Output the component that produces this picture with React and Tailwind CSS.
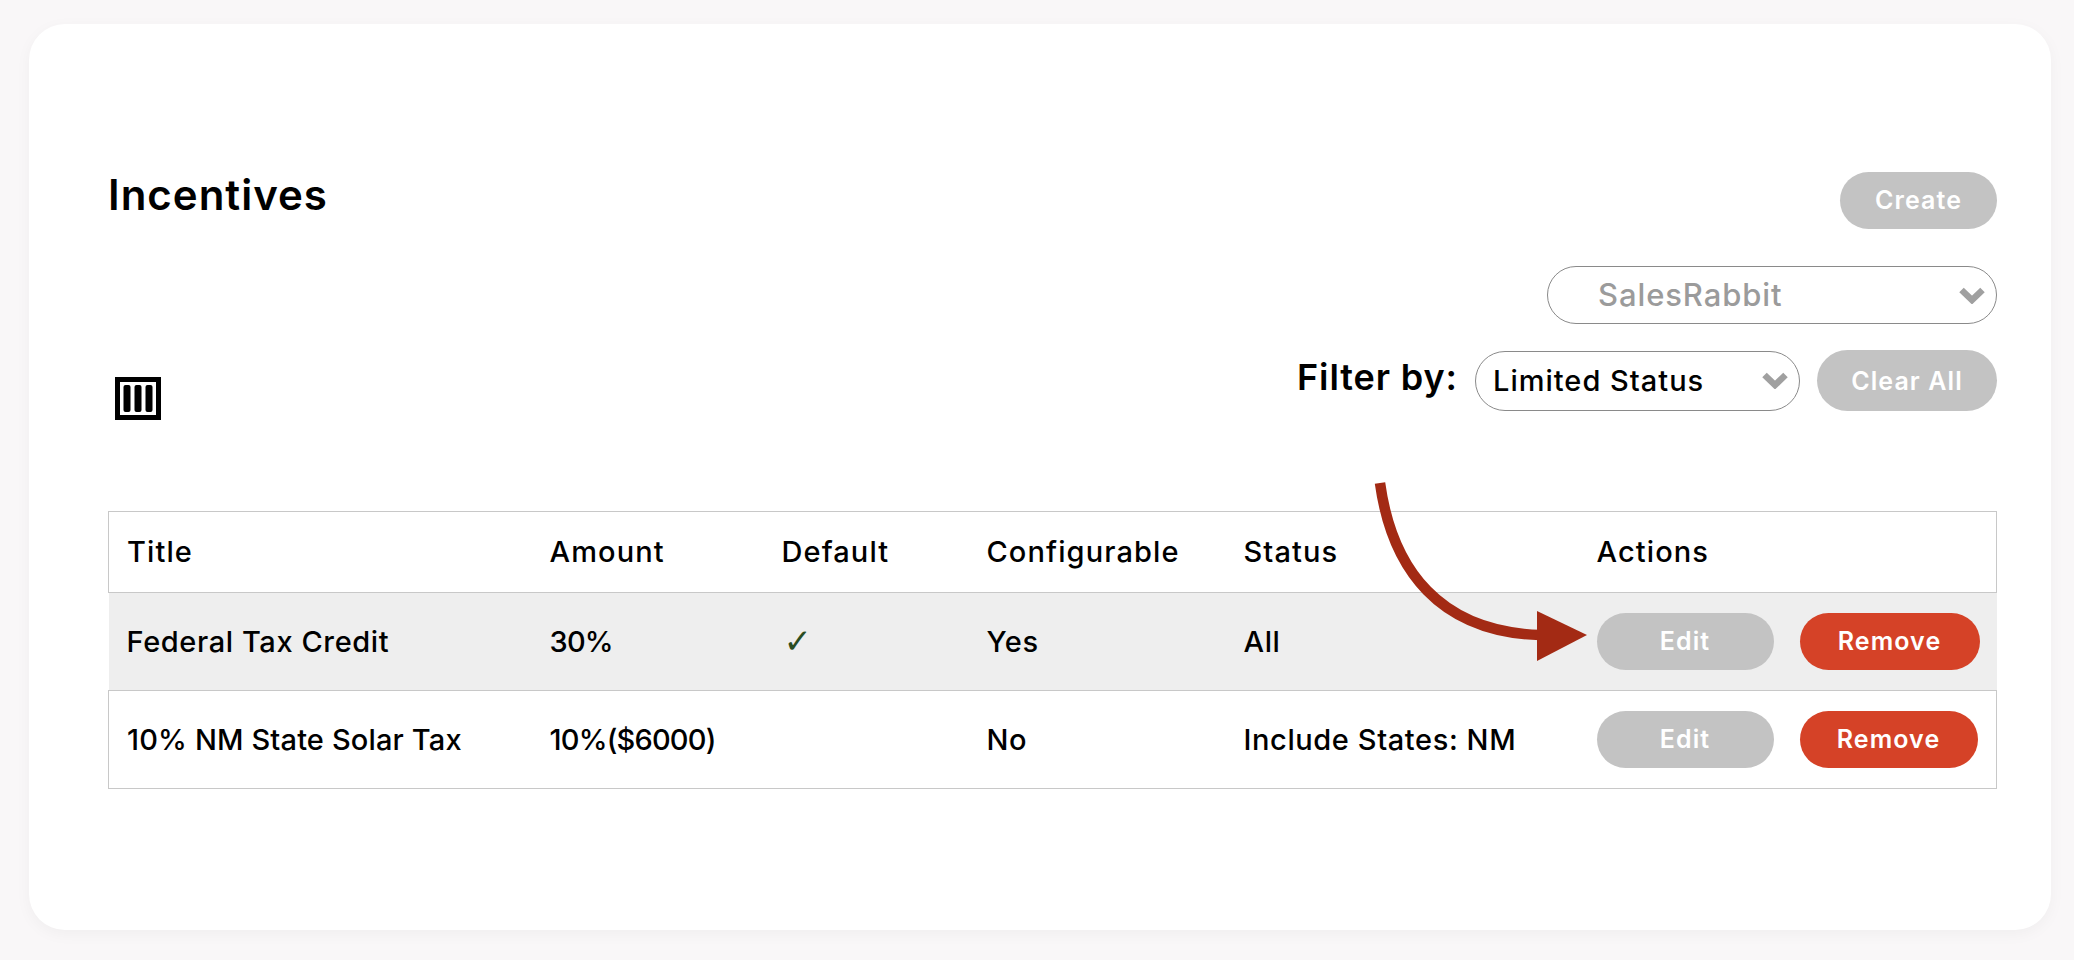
const rows = [
  { title: 'Federal Tax Credit', titleClass: 'tracking-[0.6px]', amount: '30%', check: true, configurable: 'Yes', status: 'All', shaded: true },
  { title: '10% NM State Solar Tax', titleClass: 'tracking-[0.15px]', amount: '10%($6000)', check: false, configurable: 'No', status: 'Include States: NM', shaded: false },
];

function Chevron() {
  return (
    <svg viewBox="0 0 26 17" className="w-[26px] h-[17px] shrink-0" fill="none">
      <path d="M2.5 3 13 13 23.5 3" stroke="#a0a0a0" strokeWidth="6.5" />
    </svg>
  );
}

function PillButton({ children, className }) {
  return (
    <button className={`rounded-full bg-[#c3c3c3] text-white font-semibold text-[25px] tracking-[1.1px] ${className}`}>
      {children}
    </button>
  );
}

function ColumnsIcon() {
  return (
    <svg viewBox="0 0 46 43" className="w-[46px] h-[43px]">
      <rect x="2.5" y="2.5" width="41" height="38" fill="none" stroke="#000" strokeWidth="5" />
      <rect x="8.5" y="8" width="7" height="27" rx="2" fill="#000" />
      <rect x="19.5" y="8" width="7" height="27" rx="2" fill="#000" />
      <rect x="30.5" y="8" width="7" height="27" rx="2" fill="#000" />
    </svg>
  );
}

export default function App() {
  return (
    <div className="h-[960px] bg-[#f9f7f8] pt-[24px] px-[23px] font-['Inter',sans-serif] text-black overflow-hidden">
      <div className="relative ml-[6px] h-[906px] rounded-[36px] bg-white shadow-[0_4px_16px_rgba(0,0,0,0.04)] pl-[79px] pr-[54px] pt-[148px]">
        <div className="flex justify-between">
          <h1 className="text-[42px] leading-[50px] font-semibold -mt-[2px] tracking-[1px]">Incentives</h1>
          <PillButton className="w-[157px] h-[57px]">Create</PillButton>
        </div>

        <div className="flex justify-end mt-[37px]">
          <div className="w-[450px] h-[58px] rounded-full border border-[#8a8a8a] flex items-center justify-between pl-[50px] pr-[11px] text-[31px] font-[450] tracking-[0.9px] text-[#9b9b9b]">
            <span>SalesRabbit</span>
            <Chevron />
          </div>
        </div>

        <div className="flex items-start justify-between mt-[26px]">
          <div className="ml-[7px] mt-[27px]">
            <ColumnsIcon />
          </div>
          <div className="flex items-center">
            <span className="text-[36px] font-semibold tracking-[0.9px] mr-[17px] -mt-[8px]">Filter by:</span>
            <div className="w-[325px] h-[60px] rounded-full border border-[#8a8a8a] flex items-center justify-between pl-[17px] pr-[11px] text-[29px] font-[450] tracking-[1px]">
              <span>Limited Status</span>
              <Chevron />
            </div>
            <PillButton className="w-[180px] h-[61px] ml-[17px] pt-[2px]">Clear All</PillButton>
          </div>
        </div>

        <table className="w-[1889px] mt-[91px] table-fixed border-collapse text-[29px] font-[450] tracking-[0.6px]">
          <colgroup>
            <col className="w-[423px]" />
            <col className="w-[232px]" />
            <col className="w-[205px]" />
            <col className="w-[257px]" />
            <col className="w-[353px]" />
            <col />
          </colgroup>
          <thead>
            <tr className="h-[81px] text-left border border-[#c8c8c8]">
              {['Title', 'Amount', 'Default', 'Configurable', 'Status', 'Actions'].map((h) => (
                <th key={h} className="pl-[18px] font-[450] tracking-[1.1px]">{h}</th>
              ))}
            </tr>
          </thead>
          <tbody>
            {rows.map((r) => (
              <tr key={r.title} className={r.shaded ? 'h-[98px] bg-[#eeeeee]' : 'h-[98px] border border-[#c8c8c8]'}>
                <td className={`pl-[18px] ${r.titleClass}`}>{r.title}</td>
                <td className="pl-[18px] tracking-[-0.8px]">{r.amount}</td>
                <td className="pl-[20px] text-[34px] text-[#2a4d22] font-['DejaVu_Sans',sans-serif]">{r.check ? '✓' : ''}</td>
                <td className="pl-[18px]">{r.configurable}</td>
                <td className="pl-[18px]">{r.status}</td>
                <td className="pl-[18px]">
                  <div className="flex gap-[26px]">
                    <PillButton className="w-[177px] h-[57px]">Edit</PillButton>
                    <button className={`h-[57px] rounded-full bg-[#d54227] text-white font-semibold text-[25px] tracking-[1.1px] ${r.shaded ? 'w-[180px]' : 'w-[178px]'}`}>
                      Remove
                    </button>
                  </div>
                </td>
              </tr>
            ))}
          </tbody>
        </table>

        {/* annotation arrow laid over the table */}
        <svg className="absolute left-[1340px] top-[455px] w-[230px] h-[200px] pointer-events-none" viewBox="0 0 230 200" fill="none">
          <path d="M11 4C23 91 71 153 171 156" stroke="#a32a14" strokeWidth="10.5" />
          <path d="M168 132 218 156 168 182Z" fill="#a32a14" />
        </svg>
      </div>
    </div>
  );
}
